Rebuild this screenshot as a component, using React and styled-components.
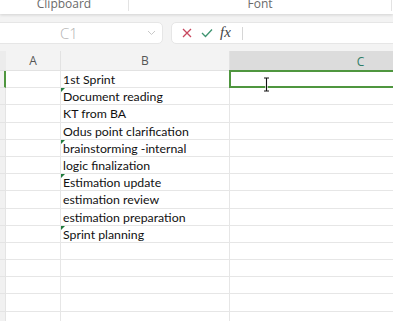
import React from 'react';
import styled, {createGlobalStyle, css} from 'styled-components';

const rows = [
  {text: '1st Sprint'},
  {text: 'Document reading', flag: true},
  {text: 'KT from BA'},
  {text: 'Odus point clarification'},
  {text: 'brainstorming -internal', flag: true},
  {text: 'logic finalization'},
  {text: 'Estimation update', flag: true},
  {text: 'estimation review'},
  {text: 'estimation preparation'},
  {text: 'Sprint planning', flag: true},
  {text: ''},
  {text: ''},
  {text: ''},
  {text: ''},
  {text: ''},
];

export default function App() {
  return (
    <>
      <GlobalStyle />
      <Page>
        <Ribbon>
          <GroupLabel width={129}>Clipboard</GroupLabel>
          <GroupLabel width={263}>Font</GroupLabel>
        </Ribbon>
        <FormulaBar>
          <NameBox>
            <NameText>C1</NameText>
            <svg width="9" height="6" viewBox="0 0 9 6">
              <path d="M1 1l3.5 3.5L8 1" fill="none" stroke="#c8c8c8" strokeWidth="1" />
            </svg>
          </NameBox>
          <FormulaBox>
            <IconSlot>
              <svg width="10" height="10" viewBox="0 0 10 10">
                <path d="M1 1l8 8M9 1l-8 8" stroke="#c8475e" strokeWidth="1.3" />
              </svg>
            </IconSlot>
            <IconSlot>
              <svg width="12" height="10" viewBox="0 0 12 10">
                <path d="M1 5l3.5 3.5L11 1.5" fill="none" stroke="#3e9470" strokeWidth="1.3" />
              </svg>
            </IconSlot>
            <Fx>fx</Fx>
            <Divider />
          </FormulaBox>
        </FormulaBar>
        <Sheet>
          <Corner />
          <ColHeader>A</ColHeader>
          <ColHeader>B</ColHeader>
          <ColHeader active>C</ColHeader>
          {rows.map((row, i) => (
            <React.Fragment key={i}>
              <RowHeader active={i === 0} />
              <Cell />
              <Cell flag={row.flag}>{row.text}</Cell>
              {i === 0 ? (
                <SelectedCell>
                  <Cursor width="7" height="15" viewBox="0 0 7 15">
                    <path d="M1 1h5M3.5 1v13M1 14h5" fill="none" stroke="#fff" strokeWidth="2.4" />
                    <path d="M1 1h5M3.5 1v13M1 14h5" fill="none" stroke="#111" strokeWidth="1.1" />
                  </Cursor>
                </SelectedCell>
              ) : (
                <Cell />
              )}
            </React.Fragment>
          ))}
        </Sheet>
      </Page>
    </>
  );
}

const GlobalStyle = createGlobalStyle`
  html, body {
    margin: 0;
    padding: 0;
    background: #fff;
    overflow: hidden;
  }
`;

const Page = styled.div`
  width: 393px;
  height: 321px;
  overflow: hidden;
  display: flex;
  flex-direction: column;
  background: #f3f3f3;
  font-family: "Open Sans", "Noto Sans", sans-serif;
`;

const Ribbon = styled.div`
  position: relative;
  z-index: 1;
  height: 14px;
  flex: none;
  display: flex;
  background: #fff;
  box-shadow: 0 1px 3px rgba(0, 0, 0, 0.14);
  overflow: hidden;
`;

const GroupLabel = styled.div`
  width: ${props => props.width}px;
  flex: none;
  box-sizing: border-box;
  height: 11px;
  border-right: 1px solid #e3e3e3;
  display: flex;
  justify-content: center;
  align-items: flex-end;
  font-size: 12px;
  line-height: 12px;
  color: #6a6a6a;
  padding-bottom: 1px;
`;

const FormulaBar = styled.div`
  height: 37px;
  flex: none;
  display: flex;
  gap: 8px;
  padding-top: 8px;
  box-sizing: border-box;
`;

const boxStyle = css`
  height: 22px;
  box-sizing: border-box;
  background: #fff;
  border: 1px solid #e6e6e6;
  border-radius: 5px;
  display: flex;
  align-items: center;
`;

const NameBox = styled.div`
  ${boxStyle};
  width: 173px;
  margin-left: -10px;
  padding: 0 6px 0 69px;
  justify-content: space-between;
`;

const NameText = styled.span`
  font-size: 15px;
  font-weight: 300;
  color: #b3b3b3;
`;

const FormulaBox = styled.div`
  ${boxStyle};
  flex: 1;
  margin-right: -10px;
  padding-left: 10px;
`;

const IconSlot = styled.span`
  display: flex;
  width: 19px;
`;

const Fx = styled.span`
  font-family: "Liberation Serif", "DejaVu Serif", serif;
  font-style: italic;
  font-size: 15px;
  color: #444;
  width: 22px;
  margin-top: -2px;
`;

const Divider = styled.span`
  width: 1px;
  height: 13px;
  background: #d6d6d6;
`;

const Sheet = styled.div`
  flex: 1;
  display: grid;
  grid-template-columns: 6px 55px 169px 262px;
  grid-template-rows: 20px;
  grid-auto-rows: 17.2px;
  background: #fff;
  font-family: Lato, "Open Sans", sans-serif;
`;

const Corner = styled.div`
  background: #ececec;
  border-bottom: 1px solid #dedede;
`;

const ColHeader = styled.div`
  display: flex;
  align-items: center;
  justify-content: center;
  box-sizing: border-box;
  font-family: "Open Sans", "Noto Sans", sans-serif;
  font-size: 12px;
  color: #555;
  background: #f3f3f3;
  border-right: 1px solid #e2e2e2;
  border-bottom: 1px solid #e2e2e2;

  ${props => props.active && css`
    background: #dcdcdc;
    color: #2f7d66;
    border-bottom: none;
  `}
`;

const RowHeader = styled.div`
  box-sizing: border-box;
  background: #f1f1f1;
  border-right: 1px solid #e4e4e4;
  border-bottom: 1px solid #e4e4e4;

  ${props => props.active && css`
    border-right: 2px solid #4f963f;
  `}
`;

const Cell = styled.div`
  position: relative;
  box-sizing: border-box;
  border-right: 1px solid #e6e6e6;
  border-bottom: 1px solid #e6e6e6;
  padding: 1px 0 0 2px;
  font-size: 12.3px;
  line-height: 16px;
  color: #111;
  white-space: nowrap;

  ${props => props.flag && css`
    &::before {
      content: '';
      position: absolute;
      top: 0;
      left: 0;
      border-top: 4px solid #1f7b3c;
      border-right: 4px solid transparent;
    }
  `}
`;

const SelectedCell = styled.div`
  position: relative;
  box-sizing: border-box;
  border: 2px solid #4f963f;
  margin: -1px 0 0 -1px;
`;

const Cursor = styled.svg`
  position: absolute;
  left: 32px;
  top: 5px;
`;
